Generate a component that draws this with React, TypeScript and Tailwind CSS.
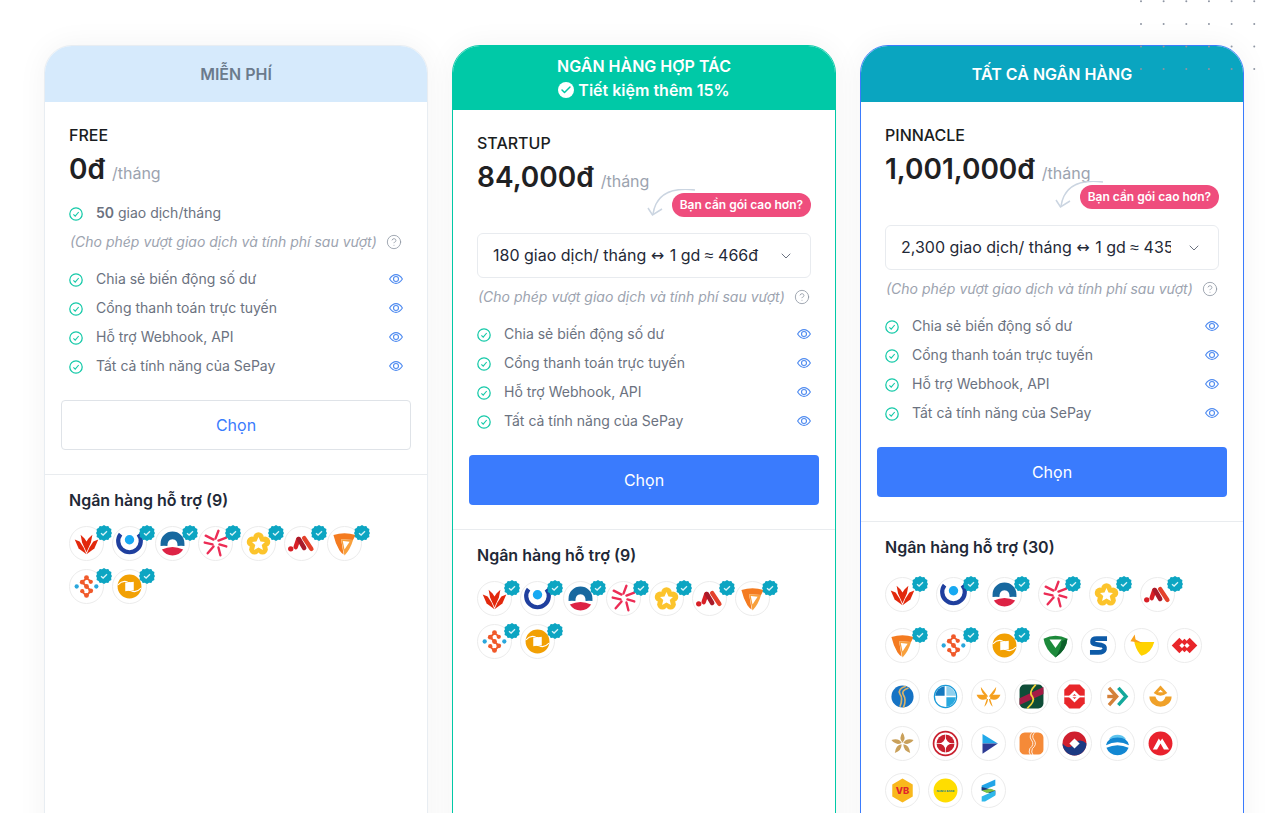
import type { ReactNode } from 'react';
import { Check, ChevronDown, CircleHelp } from 'lucide-react';

const features = [
  'Chia sẻ biến động số dư',
  'Cổng thanh toán trực tuyến',
  'Hỗ trợ Webhook, API',
  'Tất cả tính năng của SePay',
];

const bankLogos: ReactNode[] = [
  // red tulip
  <g fill="#e2280c" transform="translate(17 17) scale(1.15) translate(-17 -17)" key="tulip">
    <path d="M17 28 L9 22 L5 13 L10 15 L14 21 Z" />
    <path d="M17 28 L25 22 L29 13 L24 15 L20 21 Z" />
    <path d="M17 26 L12.5 16 L11 8 L15 12 L17 15 L19 12 L23 8 L21.5 16 Z" />
  </g>,
  // blue ring
  <g transform="translate(17 17) scale(1.1) translate(-17 -18)" key="ring">
    <path d="M7.5 8 A12 12 0 1 0 26.5 8" fill="none" stroke="#1f3f9e" strokeWidth="4.5" />
    <circle cx="17" cy="14" r="5" fill="#17a9f2" />
  </g>,
  // arch
  <g key="arch">
    <path d="M3 17 A14 14 0 0 1 31 17 L31 20 Q27 19 23 20 Q23 12 17 12 Q11 12 11 20 Q7 19 3 20Z" fill="#17689f" />
    <path d="M4.5 24 Q17 18 29.5 24 Q25 31 17 31 Q9 31 4.5 24Z" fill="#dd2345" />
  </g>,
  // red star
  <g stroke="#ec2c55" strokeWidth="2.4" strokeLinecap="round" fill="none" transform="translate(17 17) scale(1.15) translate(-17 -17)" key="star">
    <path d="M7 9 L15 13" />
    <path d="M20 4 L17 12" />
    <path d="M28 11 L20 14" />
    <path d="M6 16 L14 18" />
    <path d="M28 20 L21 18" />
    <path d="M9 27 L15 20" />
    <path d="M22 29 L20 21" />
  </g>,
  // yellow flower
  <g transform="translate(17 17) scale(0.95) translate(-17 -17)" key="flower">
    <circle cx="17" cy="9.5" r="6.5" fill="#fcc42c" />
    <circle cx="25" cy="15" r="6.5" fill="#fcc42c" />
    <circle cx="22" cy="24" r="6.5" fill="#fcc42c" />
    <circle cx="12" cy="24" r="6.5" fill="#fcc42c" />
    <circle cx="9" cy="15" r="6.5" fill="#fcc42c" />
    <path d="M17 9 L19.5 14.5 L25 15 L21 19 L22.5 25 L17 22 L11.5 25 L13 19 L9 15 L14.5 14.5 Z" fill="#fff" />
  </g>,
  // red M
  <g strokeLinecap="round" strokeWidth="5" transform="translate(17 17) scale(1.05) translate(-17 -17)" key="m">
    <circle cx="5" cy="23" r="3" fill="#d81f26" />
    <path d="M10.5 21 L13.5 12" stroke="#d81f26" />
    <path d="M14 12 L20 22" stroke="#a81a2a" />
    <path d="M20 11 L28 23" stroke="#e4402a" />
  </g>,
  // orange play
  <g key="play">
    <path d="M4 7 Q17 3 30 7 L27 13 L13 12 L16 30 Q13 28 11 25 Q6 16 4 7Z" fill="#f47b20" />
    <path d="M13 12 L27 13 Q24 24 17 31 Z" fill="#f8a03c" />
    <path d="M15 14 L23 15 L17 24 Z" fill="#fff" />
  </g>,
  // S with dots
  <g key="sdots">
    <path d="M22 11 L17 7 L12 12 L22 22 L17 28 L12 23" stroke="#f0592a" strokeWidth="2.2" fill="none" />
    <circle cx="17" cy="6.5" r="2.8" fill="#f0592a" />
    <circle cx="12" cy="12" r="2.8" fill="#f0592a" />
    <circle cx="22" cy="11.5" r="2.5" fill="#f0592a" />
    <circle cx="17" cy="17" r="2.8" fill="#f0592a" />
    <circle cx="12" cy="22.5" r="2.5" fill="#f0592a" />
    <circle cx="22" cy="22" r="2.8" fill="#f0592a" />
    <circle cx="17" cy="27.5" r="2.8" fill="#f0592a" />
    <circle cx="5.5" cy="17" r="2.5" fill="#2aa7dc" />
    <circle cx="28.5" cy="17" r="2.5" fill="#2aa7dc" />
  </g>,
  // orange coin
  <g key="coin">
    <circle cx="17" cy="17" r="14" fill="#f2a003" />
    <path d="M3.5 15 Q9 9 15 12 Q18 13 22 12" fill="none" stroke="#fff" strokeWidth="1.2" />
    <path d="M30.5 19 Q25 25 19 22 Q16 21 12 22" fill="none" stroke="#fff" strokeWidth="1.2" />
    <path d="M12 12.5 H22 V21.5 H12 Z" fill="#fff" />
  </g>,
  // green shield
  <g key="shield">
    <path d="M3 9 Q17 2 31 9 Q30 22 17 31 Q5 22 3 9Z" fill="#1d8a3b" />
    <path d="M31 9 Q30 22 17 31 Q24 20 24 12Z" fill="#0d5f2b" />
    <path d="M10 10 L24 10 L17 20Z" fill="#fff" />
  </g>,
  // blue S
  <path key="s" d="M27 9 H15 Q10 9 10 12.5 Q10 15 14 15.5 L20 16.5 Q25 17.5 24 21.5 Q23 25 17 25 H7" fill="none" stroke="#0d5aa7" strokeWidth="5.5" />,
  // yellow swoosh
  <g key="swoosh">
    <path d="M8 8 L12 13 L32 13 Q28 27 17 29 Q12 25 9 15Z" fill="#ffd200" />
    <path d="M4 12 L9 4 L10 10 L18 14Z" fill="#f9a11b" />
  </g>,
  // red diamonds
  <g fill="#e8262a" key="diamonds">
    <path d="M2 17 L11 8 L15.5 12.5 L11 17 L15.5 21.5 L11 26Z" />
    <path d="M32 17 L23 8 L18.5 12.5 L23 17 L18.5 21.5 L23 26Z" />
    <path d="M17 9 L21 13 L17 17 L13 13Z M17 17 L21 21 L17 25 L13 21Z" />
  </g>,
  // blue globe
  <g key="globe">
    <circle cx="17" cy="17" r="13" fill="#1673c4" />
    <path d="M21 5 Q11 8 14 14 Q18 19 14 29 M24 7 Q15 10 18 15 Q22 21 18 30" fill="none" stroke="#d9b36a" strokeWidth="2" />
  </g>,
  // quartered disc
  <g key="disc">
    <circle cx="17" cy="17" r="13" fill="#fff" stroke="#1b9bd8" strokeWidth="1.5" />
    <path d="M16 5 A12 12 0 0 0 5 16 H16Z" fill="#1479bf" />
    <path d="M18 18 V29 A12 12 0 0 0 29 18Z" fill="#28a8de" />
    <path d="M18 5 A12 12 0 0 1 29 16 H18Z" fill="#8fd0ee" />
  </g>,
  // orange butterfly
  <g fill="#f5a01f" key="butterfly">
    <path d="M16 16 L8 6 Q8 14 16 18Z" />
    <path d="M18 16 L26 6 Q26 14 18 18Z" />
    <path d="M15 15 L3 15 Q6 23 15 20Z" />
    <path d="M19 15 L31 15 Q28 23 19 20Z" />
    <path d="M15 20 L12 29 Q16 26 16.5 20Z M19 20 L22 29 Q18 26 17.5 20Z" />
  </g>,
  // dark squircle
  <g key="squircle">
    <rect x="3" y="3" width="28" height="28" rx="6" fill="#0f4d38" />
    <path d="M3 27 L3 19 L31 6 L31 14 Z" fill="#a51c45" />
    <path d="M22 3 Q13 12 18 17 Q22 22 12 31" fill="none" stroke="#f2d33a" strokeWidth="2" />
  </g>,
  // red octagon
  <g key="octagon">
    <path d="M11 3 H23 L29 9 V25 L23 31 H11 L5 25 V9Z" fill="#e8262a" />
    <path d="M17 10 L24 17 L17 24 L10 17Z" fill="#fff" />
    <path d="M17 14 L20 17 L17 20 L14 17Z" fill="#e8262a" />
    <path d="M5 16 H29 V18 H5Z" fill="#fff" />
  </g>,
  // chevrons
  <g fill="none" strokeWidth="4" key="chevrons">
    <path d="M7 7 L16 17 L7 27" stroke="#d5813a" />
    <path d="M5 17 H15" stroke="#d5813a" />
    <path d="M18 7 L27 17 L18 27" stroke="#13a99c" />
  </g>,
  // orange bowl
  <g fill="#f0a129" key="bowl">
    <path d="M4 17 H11 Q13 23 17 23 Q21 23 23 17 H30 A13 12 0 0 1 4 17Z" />
    <path d="M17 4 L25 13 Q17 19 9 13Z" />
    <path d="M17 9 L20 12 L14 12Z" fill="#fff" />
  </g>,
  // gold flower
  <g fill="#c9a05a" key="goldstar">
    <path d="M17 4 Q22 11 17 16 Q12 11 17 4Z" />
    <path d="M30 13 Q24 20 18 16 Q22 10 30 13Z" />
    <path d="M26 28 Q18 26 18 18 Q25 19 26 28Z" />
    <path d="M8 28 Q9 19 16 18 Q16 26 8 28Z" />
    <path d="M4 13 Q12 10 16 16 Q10 20 4 13Z" />
  </g>,
  // red coin
  <g key="redcoin">
    <circle cx="17" cy="17" r="14" fill="none" stroke="#c8202e" strokeWidth="2" />
    <circle cx="17" cy="17" r="10.5" fill="#c8202e" />
    <path d="M17 9.5 Q18 16 24.5 17 Q18 18 17 24.5 Q16 18 9.5 17 Q16 16 17 9.5Z" fill="#fff" />
    <path d="M5 17 H29 M17 5 V29" stroke="#fff" strokeWidth="0.8" />
  </g>,
  // blue play
  <g key="blueplay">
    <path d="M10 6 L28 17 L10 17Z" fill="#22a9ea" />
    <path d="M10 17 L28 17 L10 29Z" fill="#2d3a93" />
  </g>,
  // orange wave
  <g key="wave">
    <rect x="3" y="4" width="28" height="26" rx="6" fill="#f58a38" />
    <path d="M19 3 Q13 8 17 13 Q21 18 15 23 Q13 27 16 31" fill="none" stroke="#fff" strokeWidth="1" />
    <path d="M22 3 Q16 8 20 13 Q24 18 18 23 Q16 27 19 31" fill="none" stroke="#fff" strokeWidth="1" />
  </g>,
  // red blue circle
  <g key="redblue">
    <circle cx="17" cy="17" r="14" fill="#cf1f2e" />
    <path d="M3 17 Q9 24 14 20 L20 14 Q26 12 31 17 A14 14 0 0 1 3 17Z" fill="#1c3a83" />
    <path d="M17 11 L23 17 L17 23 L11 17Z" fill="#fff" />
  </g>,
  // blue dome
  <g key="dome">
    <path d="M3.5 19 A14 14 0 0 1 30.5 19 Q17 12 3.5 19Z" fill="#1287d2" />
    <path d="M4 22 Q17 16 30 22 A14 14 0 0 1 4 22Z" fill="#1287d2" />
    <path d="M7 12 A12 12 0 0 1 27 12 Q17 8 7 12Z" fill="#5fc4ee" />
  </g>,
  // red mountain
  <g key="mountain">
    <circle cx="17" cy="17" r="14" fill="#e9222d" />
    <path d="M8 24 L15 11 L17 14 L19 11 L27 24 L21 24 L17 17 L13 24Z" fill="#fff" />
  </g>,
  // VB hexagon
  <g key="vb">
    <path d="M17 3 L29 10 V24 L17 31 L5 24 V10Z" fill="#f9b81c" />
    <text x="17" y="21" textAnchor="middle" fontSize="11" fontWeight="800" fontFamily="Inter, sans-serif" fill="#e0262b">VB</text>
  </g>,
  // yellow nam a
  <g key="nama">
    <circle cx="17" cy="17" r="14" fill="#ffdd00" />
    <text x="17" y="18.5" textAnchor="middle" fontSize="3.2" fontWeight="700" fontFamily="Inter, sans-serif" fill="#0b7a94">NAM A BANK</text>
  </g>,
  // layered S
  <g key="layers">
    <path d="M25 4 V11 L9 17 V11Z" fill="#22a5e8" />
    <path d="M9 13 L25 17 V22 L9 17Z" fill="#1f3a7a" />
    <path d="M25 17 V23 L13 30 L9 30 V24Z" fill="#2fb8ea" />
    <path d="M9 17 L19 15 L25 17 L15 20Z" fill="#7cc243" />
  </g>,
];

function CheckCircle() {
  return (
    <svg viewBox="0 0 14 14" className="mt-[2px] w-[14px] h-[14px] shrink-0" fill="none" stroke="#14c9a8">
      <circle cx="7" cy="7" r="6.2" strokeWidth="1.25" />
      <path d="M4.4 7.3 L6.2 9.1 L9.7 5" strokeWidth="1.1" />
    </svg>
  );
}

function EyeIcon() {
  return (
    <svg viewBox="0 0 14 10" className="w-[14px] h-[10px] shrink-0" fill="none" stroke="#4f8bf0" strokeWidth="1.1">
      <path d="M0.6 5 C3 1.2 5 0.6 7 0.6 C9 0.6 11 1.2 13.4 5 C11 8.8 9 9.4 7 9.4 C5 9.4 3 8.8 0.6 5Z" />
      <circle cx="7" cy="5" r="2.5" />
    </svg>
  );
}

function VerifiedBadge() {
  return (
    <svg viewBox="0 0 16 16" className="absolute -right-[9px] -top-[2px] w-4 h-4">
      <path
        d="M8 0 L10 1.2 L12.3 1 L13.4 3 L15.4 4.1 L15.1 6.4 L16 8 L15.1 9.8 L15.4 12 L13.4 13.1 L12.3 15 L10 14.8 L8 16 L6 14.8 L3.7 15 L2.6 13.1 L0.6 12 L0.9 9.8 L0 8 L0.9 6.4 L0.6 4.1 L2.6 3 L3.7 1 L6 1.2Z"
        fill="#0ca5c2"
      />
      <path d="M5 8.2 L7.1 10 L11 6.2" fill="none" stroke="#d8f3f8" strokeWidth="1.3" />
    </svg>
  );
}

function BankLogo({ index, verified, wide }: { index: number; verified: boolean; wide: boolean }) {
  return (
    <div
      className={`relative flex items-center justify-center w-[35px] h-[35px] shrink-0 rounded-full border border-[#ececec] bg-white ${
        verified && wide ? 'mr-2 mb-1' : ''
      }`}
    >
      <svg viewBox="0 0 34 34" className="w-[29px] h-[29px]">
        {bankLogos[index]}
      </svg>
      {verified && <VerifiedBadge />}
    </div>
  );
}

function UpgradeHint() {
  return (
    <div className="absolute right-0 top-[62px] flex items-start">
      <svg viewBox="0 0 50 30" className="absolute -left-[25px] -top-[4px] w-[50px] h-[30px]" fill="none">
        <path d="M48 1 C32 -1 10 0 6 25" stroke="#cbd5e1" strokeWidth="1.5" />
        <path d="M1 19 L5.5 26 L15 20" stroke="#cbd5e1" strokeWidth="1.5" />
      </svg>
      <span className="relative h-6 rounded-full bg-[#ef4d7d] px-2 text-xs font-semibold leading-6 text-white">
        Bạn cần gói cao hơn?
      </span>
    </div>
  );
}

interface PlanProps {
  name: string;
  price: string;
  header: ReactNode;
  headerClass: string;
  borderClass: string;
  primary: boolean;
  quota?: string;
  option?: [string, string];
  bankCount: number;
  verifiedCount: number;
  wide?: boolean;
}

function PlanCard(p: PlanProps) {
  return (
    <div className={`flex-1 rounded-t-[28px] border bg-white shadow-[0_0_30px_rgba(15,23,42,0.05)] overflow-hidden ${p.borderClass}`}>
      <div className={`flex flex-col items-center justify-center text-center font-semibold ${p.headerClass}`}>
        {p.header}
      </div>

      <div className="px-6 pt-[21px]">
        <div className="relative">
          <div className="text-base leading-6 font-medium text-[#1a1d21]">{p.name}</div>
          <div className="mt-[1px] flex items-baseline h-[45px]">
            <span className="text-[28px] leading-[42px] font-semibold text-[#1f2123]">{p.price}</span>
            <span className="ml-[7px] text-base text-[#9ca3af]">/tháng</span>
          </div>
          {p.option && <UpgradeHint />}
        </div>

        {p.option ? (
          <div className="mt-[32px] flex h-[45px] items-center rounded-md border border-[#e8ebef] pl-[15px] pr-4">
            <span className="min-w-0 flex-1 overflow-hidden whitespace-nowrap text-base text-[#1f2937]">
              {p.option[0]} <span className="mr-[1px] font-['DejaVu_Sans',sans-serif]">↔</span> 1 gd{' '}
              <span className="font-['Liberation_Sans',sans-serif]">≈</span> {p.option[1]}
            </span>
            <ChevronDown className="ml-[15px] w-4 h-4 shrink-0 text-[#6b7280]" strokeWidth={1.5} />
          </div>
        ) : (
          <div className="mt-[10px] flex h-5 items-center text-sm text-[#6b7280]">
            <CheckCircle />
            <span className="ml-[13px]">
              <b className="font-semibold">{p.quota}</b> giao dịch/tháng
            </span>
          </div>
        )}

        <div className="mt-[9px] flex items-center justify-between pl-[1px] pr-[1px] text-sm italic text-[#9ca3af]">
          <span>(Cho phép vượt giao dịch và tính phí sau vượt)</span>
          <CircleHelp className="w-4 h-4 shrink-0 text-[#8f98a3]" strokeWidth={1.25} />
        </div>

        <ul className="mt-[17px] flex flex-col gap-[9px]">
          {features.map((f) => (
            <li key={f} className="flex h-5 items-center text-sm text-[#6b7280]">
              <CheckCircle />
              <span className="ml-[13px] flex-1">{f}</span>
              <EyeIcon />
            </li>
          ))}
        </ul>
      </div>

      <div className="mt-[24px] px-4">
        <button
          className={`flex h-[50px] w-full items-center justify-center rounded text-base ${
            p.primary ? 'bg-[#3a7bfd] text-white' : 'border border-[#dfe3e8] bg-white text-[#3a7bfd]'
          }`}
        >
          Chọn
        </button>
      </div>

      <div className="mt-[24px] border-t border-[#e9ecef] px-6 pt-[13px] pb-10">
        <div className="text-base leading-6 font-semibold text-[#1f2937]">Ngân hàng hỗ trợ ({p.bankCount})</div>
        <div className={`flex flex-wrap items-start gap-x-2 ${p.wide ? 'mt-[18px] gap-y-3' : 'mt-[14px] gap-y-2'}`}>
          {Array.from({ length: p.bankCount }).map((_, i) => (
            <BankLogo key={i} index={i} verified={i < p.verifiedCount} wide={!!p.wide} />
          ))}
        </div>
      </div>
    </div>
  );
}

function DotPattern() {
  const cols = [0, 1, 2, 3, 4, 5];
  const rows = [0, 1, 2, 3];
  return (
    <svg className="absolute left-[1139px] top-0 w-[120px] h-[74px] pointer-events-none" viewBox="0 0 120 74">
      {rows.map((r) =>
        cols.map((c) => (
          <circle key={`${r}-${c}`} cx={2 + c * 22.65} cy={1.3 + r * 22.6} r="1" fill="#8f96a3" />
        )),
      )}
    </svg>
  );
}

export default function App() {
  return (
    <div className="relative h-[813px] overflow-hidden bg-white font-['Inter',sans-serif]">
      <div className="flex gap-6 pl-[44px] pr-[23px] pt-[45px]">
        <PlanCard
          name="FREE"
          price="0đ"
          quota="50"
          header={<span>MIỄN PHÍ</span>}
          headerClass="h-[56px] bg-[#d6eafc] text-[#6b7a8c]"
          borderClass="border-[#e8edf2]"
          primary={false}
          bankCount={9}
          verifiedCount={9}
        />
        <PlanCard
          name="STARTUP"
          price="84,000đ"
          option={['180 giao dịch/ tháng', '466đ']}
          header={
            <>
              <span className="leading-6">NGÂN HÀNG HỢP TÁC</span>
              <span className="flex items-center gap-1 leading-6">
                <span className="flex h-4 w-4 items-center justify-center rounded-full bg-white">
                  <Check className="w-3 h-3 text-[#00c9a7]" strokeWidth={3} />
                </span>
                Tiết kiệm thêm 15%
              </span>
            </>
          }
          headerClass="h-[64px] bg-[#00c9a7] text-white"
          borderClass="border-[#00c9a7]"
          primary
          bankCount={9}
          verifiedCount={9}
        />
        <PlanCard
          name="PINNACLE"
          price="1,001,000đ"
          option={['2,300 giao dịch/ tháng', '435đ']}
          header={<span>TẤT CẢ NGÂN HÀNG</span>}
          headerClass="h-[56px] bg-[#0aa5c0] text-white"
          borderClass="border-[#3a7bfd]"
          primary
          bankCount={30}
          verifiedCount={9}
          wide
        />
      </div>
      <DotPattern />
    </div>
  );
}
